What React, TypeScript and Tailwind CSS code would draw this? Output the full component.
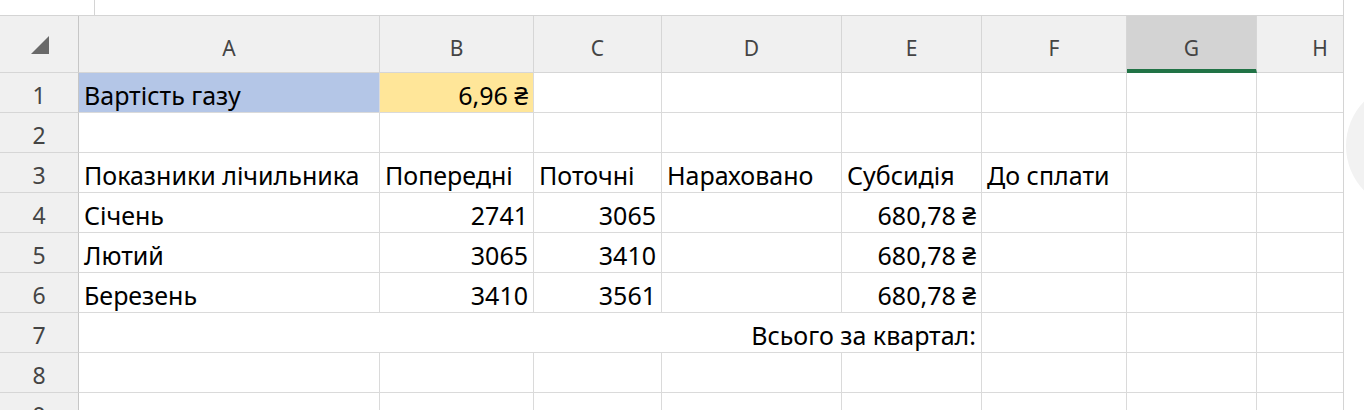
import React from "react";

type Col = { key: string; w: string };

const cols: Col[] = [
  { key: "A", w: "w-[301px]" },
  { key: "B", w: "w-[154px]" },
  { key: "C", w: "w-[128px]" },
  { key: "D", w: "w-[180px]" },
  { key: "E", w: "w-[140px]" },
  { key: "F", w: "w-[145px]" },
  { key: "G", w: "w-[130px]" },
  { key: "H", w: "w-[127px]" },
];

type Cell = { text?: string; right?: boolean; bg?: string };

const rows: Cell[][] = [
  [
    { text: "Вартість газу", bg: "bg-[#b4c6e7]" },
    { text: "6,96 ₴", right: true, bg: "bg-[#ffe699]" },
  ],
  [],
  [
    { text: "Показники лічильника" },
    { text: "Попередні" },
    { text: "Поточні" },
    { text: "Нараховано" },
    { text: "Субсидія" },
    { text: "До сплати" },
  ],
  [
    { text: "Січень" },
    { text: "2741", right: true },
    { text: "3065", right: true },
    {},
    { text: "680,78 ₴", right: true },
  ],
  [
    { text: "Лютий" },
    { text: "3065", right: true },
    { text: "3410", right: true },
    {},
    { text: "680,78 ₴", right: true },
  ],
  [
    { text: "Березень" },
    { text: "3410", right: true },
    { text: "3561", right: true },
    {},
    { text: "680,78 ₴", right: true },
  ],
];

const cellFont = "font-['Noto_Sans','DejaVu_Sans',sans-serif] text-[25px] leading-[34px] text-black";
const headFont = "font-['Noto_Sans','DejaVu_Sans',sans-serif] text-[21px] text-[#444]";
const numFont = "font-['Noto_Sans','DejaVu_Sans',sans-serif] text-[23px] leading-[32px] text-[#444]";

function RowHead({ n }: { n: number }) {
  return (
    <div
      className={`flex h-full w-[79px] shrink-0 items-end justify-center border-b border-r border-b-[#d6d6d6] border-r-[#c6c6c6] bg-[#f0f0f0] pb-[1px] ${numFont}`}
    >
      {n}
    </div>
  );
}

function GridCell({ col, cell }: { col: Col; cell?: Cell }) {
  return (
    <div
      className={`flex h-full shrink-0 items-end overflow-visible whitespace-nowrap border-b border-r border-[#dadada] px-[5px] pb-0 ${col.w} ${cell?.bg ?? "bg-white"} ${cell?.right ? "justify-end" : "justify-start"} ${cellFont}`}
    >
      {cell?.text}
    </div>
  );
}

export default function App() {
  return (
    <div className="relative h-[410px] w-[1364px] overflow-hidden bg-white">
      {/* formula strip */}
      <div className="flex h-[16px] w-[1344px] border-b border-[#d4d4d4]">
        <div className="w-[95px] border-r border-[#d4d4d4]" />
      </div>

      {/* column headers */}
      <div className="flex h-[57px]">
        <div className="flex w-[79px] shrink-0 items-center justify-center border-b border-r border-b-[#d6d6d6] border-r-[#c6c6c6] bg-[#f0f0f0]">
          <svg width="20" height="20" viewBox="0 0 20 20" className="ml-[1px] mt-[1px]">
            <path d="M19 1 L19 19 L1 19 Z" fill="#696969" />
          </svg>
        </div>
        {cols.map((c) =>
          c.key === "G" ? (
            <div
              key={c.key}
              className={`flex shrink-0 items-center justify-center border-b-[4px] border-r border-b-[#217346] border-r-[#d6d6d6] bg-[#d3d3d3] pt-[12px] ${c.w} ${headFont} text-[#333]`}
            >
              {c.key}
            </div>
          ) : (
            <div
              key={c.key}
              className={`flex shrink-0 items-center justify-center border-b border-r border-[#d6d6d6] bg-[#f0f0f0] pt-[10px] ${c.w} ${headFont}`}
            >
              {c.key}
            </div>
          )
        )}
      </div>

      {/* body */}
      {rows.map((r, i) => (
        <div key={i} className="flex h-[40px]">
          <RowHead n={i + 1} />
          {cols.map((c, j) => (
            <GridCell key={c.key} col={c} cell={r[j]} />
          ))}
        </div>
      ))}

      <div className="flex h-[40px]">
        <RowHead n={7} />
        <div
          className={`flex h-full w-[903px] shrink-0 items-end justify-end whitespace-nowrap border-b border-r border-[#dadada] px-[5px] ${cellFont}`}
        >
          Всього за квартал:
        </div>
        {cols.slice(5).map((c) => (
          <GridCell key={c.key} col={c} />
        ))}
      </div>

      {[8, 9].map((n) => (
        <div key={n} className="flex h-[40px]">
          <RowHead n={n} />
          {cols.map((c) => (
            <GridCell key={c.key} col={c} />
          ))}
        </div>
      ))}

      {/* side pane covering the sheet's right edge, with its floating button */}
      <div className="absolute left-[1343px] top-0 h-full w-[21px] overflow-hidden border-l border-[#d4d4d4] bg-white">
        <div className="ml-[2px] mt-[82px] h-[128px] w-[128px] rounded-full bg-[#f2f2f2]" />
      </div>
    </div>
  );
}
